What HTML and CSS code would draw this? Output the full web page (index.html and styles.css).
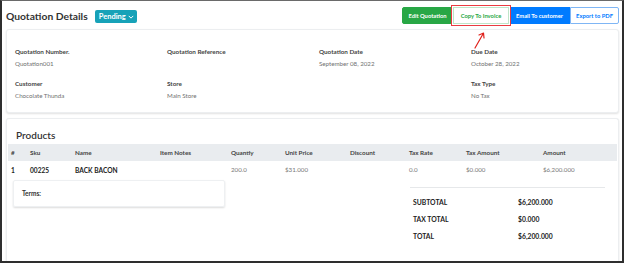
FILE: index.html
```html
<!DOCTYPE html>
<html>
<head>
<meta charset="utf-8">
<link rel="stylesheet" href="styles.css">
</head>
<body>
<div class="frame">
  <header class="top">
    <div class="title-wrap">
      <h1 class="title">Quotation Details</h1>
      <span class="badge">Pending <svg class="chev" viewBox="0 0 8 5" width="6" height="4"><path d="M1 1l3 3 3-3" fill="none" stroke="#fff" stroke-width="1.3"/></svg></span>
    </div>
    <div class="actions">
      <button class="btn btn-green">Edit Quotation</button>
      <button class="btn btn-outline-green">Copy To Invoice</button>
      <button class="btn btn-blue">Email To customer</button>
      <button class="btn btn-outline-blue">Export to PDF</button>
    </div>
  </header>

  <section class="card info">
    <div class="field"><div class="label">Quotation Number.</div><div class="value">Quotation001</div></div>
    <div class="field"><div class="label">Quotation Reference</div><div class="value"></div></div>
    <div class="field"><div class="label">Quotation Date</div><div class="value">September 08, 2022</div></div>
    <div class="field"><div class="label">Due Date</div><div class="value">October 28, 2022</div></div>
    <div class="field"><div class="label">Customer</div><div class="value">Chocolate Thunda</div></div>
    <div class="field"><div class="label">Store</div><div class="value">Main Store</div></div>
    <div class="field"><div class="label"></div><div class="value"></div></div>
    <div class="field"><div class="label">Tax Type</div><div class="value">No Tax</div></div>
  </section>

  <section class="card products">
    <h2 class="products-title">Products</h2>
    <table class="items">
      <thead>
        <tr>
          <th class="c-num">#</th><th class="c-sku">Sku</th><th class="c-name">Name</th><th class="c-notes">Item Notes</th><th class="c-qty">Quantiy</th><th class="c-price">Unit Price</th><th class="c-disc">Discount</th><th class="c-rate">Tax Rate</th><th class="c-tamt">Tax Amount</th><th class="c-amt">Amount</th>
        </tr>
      </thead>
      <tbody>
        <tr>
          <td class="strong">1</td><td class="strong">00225</td><td class="strong">BACK BACON</td><td></td><td>200.0</td><td>$31.000</td><td></td><td>0.0</td><td>$0.000</td><td>$6,200.000</td>
        </tr>
      </tbody>
    </table>
    <div class="bottom">
      <div class="terms">Terms:</div>
      <div class="totals">
        <div class="trow"><span>SUBTOTAL</span><span>$6,200.000</span></div>
        <div class="trow"><span>TAX TOTAL</span><span>$0.000</span></div>
        <div class="trow"><span>TOTAL</span><span>$6,200.000</span></div>
      </div>
    </div>
  </section>

  <svg class="arrow" viewBox="0 0 14 20" width="14" height="20"><path d="M2 18 L10 4 M6 5 L10.5 3 L11 8" fill="none" stroke="#e0201b" stroke-width="1.2" stroke-linecap="round" stroke-linejoin="round"/></svg>
</div>
</body>
</html>
```

FILE: styles.css
```css
* { box-sizing: border-box; }
html, body { margin: 0; padding: 0; background: #fff; }
body { font-family: Lato, "Noto Sans", Arial, sans-serif; color: #333; }

.frame {
  position: relative;
  width: 624px;
  height: 263px;
  overflow: hidden;
  border-left: 2px solid #2e2e2e;
  border-right: 2px solid #2e2e2e;
  border-bottom: 2px solid #2e2e2e;
  border-top: 1px solid #6a6a6a;
  padding: 0 3px 0 4px;
}

.top {
  display: flex;
  justify-content: space-between;
  align-items: flex-start;
  height: 28px;
}
.title-wrap { display: flex; align-items: center; gap: 7px; margin-top: 7px; }
.title { margin: 0; font-size: 10.3px; font-weight: 700; color: #333; line-height: 16px; }
.badge {
  display: inline-flex; align-items: center; gap: 2px;
  background: #17a2b8; color: #fff;
  font-size: 7.5px; font-weight: 700;
  height: 13px; padding: 0 3px 0 4px; border-radius: 2px;
}
.chev { margin-top: 1px; }

.actions { display: flex; margin-top: 6px; }
.btn {
  height: 17px; padding: 0;
  font-family: inherit; font-size: 5.8px; font-weight: 700;
  border: 1px solid transparent; border-radius: 0;
  line-height: 15px;
}
.btn-green { background: #28a745; color: #fff; border-color: #28a745; border-radius: 2px 0 0 2px; width: 51px; }
.btn-outline-green { background: #fff; color: #28a745; border-color: #bfe5c8; width: 56px; position: relative; z-index: 1; box-shadow: 0 0 0 1px #fff, 0 0 0 2px #ea3b41; }
.btn-blue { background: #007bff; color: #fff; border-color: #007bff; width: 61px; }
.btn-outline-blue { background: #fff; color: #007bff; border-color: #7fb6f5; border-radius: 0 2px 2px 0; width: 49px; }

.card {
  background: #fff;
  border: 1px solid #eceef0;
  box-shadow: 0 1px 2px rgba(0,0,0,0.12);
  border-radius: 3px;
}

.info {
  height: 84px;
  display: grid;
  grid-template-columns: 152px 152px 152px 1fr;
  grid-auto-rows: 32px;
  padding: 17px 8px 0 8px;
}
.label { font-size: 6.3px; font-weight: 700; color: #444; height: 9px; line-height: 9px; }
.value { font-size: 6.2px; color: #707070; margin-top: 3px; line-height: 9px; height: 9px; }

.products {
  margin-top: 5px;
  height: 160px;
  border-bottom: none;
  padding: 0 1px;
}
.products-title { margin: 0; font-size: 10px; font-weight: 600; color: #333; padding: 8px 0 0 8px; line-height: 16px; height: 25px; }

.items { width: 100%; border-collapse: collapse; table-layout: fixed; }
.items th {
  background: #e9ecef; height: 17px; font-size: 6.3px; font-weight: 700; color: #444; text-align: left; padding: 0 0 0 3px;
}
.items td { height: 17px; font-size: 6.2px; color: #777; text-align: left; padding: 0 0 0 3px; }
.items td.strong { font-weight: 700; color: #222; font-size: 6.6px; }
.c-num { width: 19px; }
.c-sku { width: 45px; }
.c-name { width: 85px; }
.c-notes { width: 71px; }
.c-qty { width: 54px; }
.c-price { width: 65px; }
.c-disc { width: 59px; }
.c-rate { width: 57px; }
.c-tamt { width: 77px; }
.c-amt { width: auto; }

.bottom { display: flex; align-items: flex-start; padding: 2px 0 0 5px; }
.terms {
  width: 212px; height: 27px;
  border: 1px solid #eef0f2; box-shadow: 0 1px 2px rgba(0,0,0,0.14); border-radius: 2px;
  font-size: 6.5px; font-weight: 700; color: #333;
  padding: 9px 0 0 8px;
}
.totals { margin-left: 185px; width: 195px; border-top: 1px solid #e6e8ea; margin-top: 7px; padding: 10px 0 0 3px; }
.trow { display: flex; height: 17px; font-size: 6.8px; font-weight: 700; color: #222; }
.trow span:first-child { width: 105px; }

.arrow { position: absolute; left: 471px; top: 29px; }
```
